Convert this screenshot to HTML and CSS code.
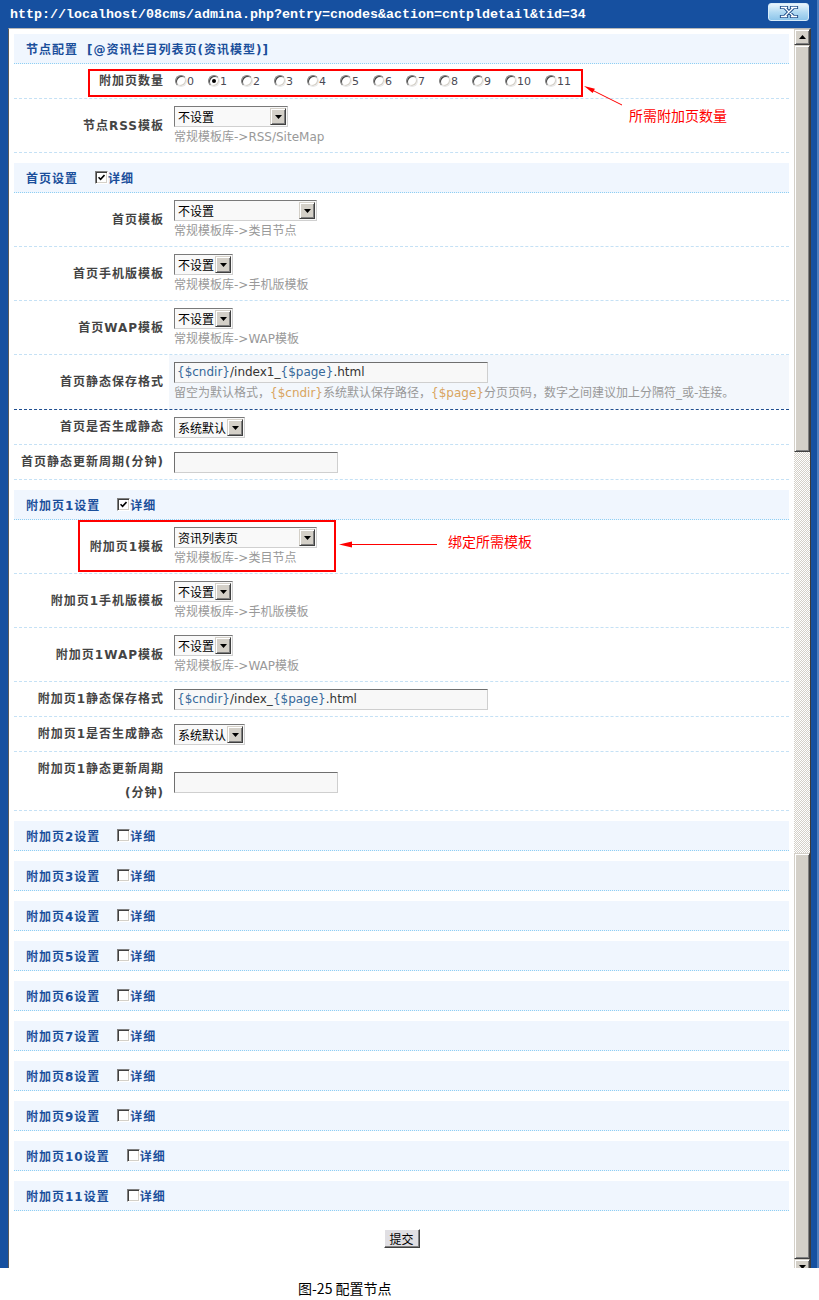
FILE: index.html
```html
<!DOCTYPE html>
<html lang="zh-CN">
<head>
<meta charset="utf-8">
<title>配置节点</title>
<link rel="stylesheet" href="styles.css">
</head>
<body>
<div class="window">
  <div class="titlebar">
    <span class="title">http://localhost/08cms/admina.php?entry=cnodes&amp;action=cntpldetail&amp;tid=34</span>
    <span class="close"><svg width="20" height="12" viewBox="0 0 20 12"><path d="M5.5 1.5 L14.5 10.5 M14.5 1.5 L5.5 10.5 M2.5 1.5h5 M12.5 1.5h5 M2.5 10.5h5 M12.5 10.5h5" stroke="#21508c" stroke-width="3.2" fill="none" stroke-linecap="square"/><path d="M5.5 1.5 L14.5 10.5 M14.5 1.5 L5.5 10.5 M2.5 1.5h5 M12.5 1.5h5 M2.5 10.5h5 M12.5 10.5h5" stroke="#fff" stroke-width="1.3" fill="none" stroke-linecap="square"/></svg></span>
  </div>
  <div class="client">
    <div class="content">
      <form class="form">
        <div class="head">节点配置<span class="sub">[@资讯栏目列表页(资讯模型)]</span></div>
        <div class="row">
          <div class="lab">附加页数量</div>
          <div class="val">
            <div class="radios">
              <label class="rad"><i></i>0</label>
              <label class="rad"><i class="on"></i>1</label>
              <label class="rad"><i></i>2</label>
              <label class="rad"><i></i>3</label>
              <label class="rad"><i></i>4</label>
              <label class="rad"><i></i>5</label>
              <label class="rad"><i></i>6</label>
              <label class="rad"><i></i>7</label>
              <label class="rad"><i></i>8</label>
              <label class="rad"><i></i>9</label>
              <label class="rad"><i></i>10</label>
              <label class="rad"><i></i>11</label>
            </div>
          </div>
        </div>
        <div class="row">
          <div class="lab">节点RSS模板</div>
          <div class="val">
            <div class="sel w114"><span class="txt">不设置</span><span class="btn"><svg width="7" height="4" viewBox="0 0 7 4"><path d="M0 0h7L3.5 4z" fill="#000"/></svg></span></div>
            <div class="hint">常规模板库-&gt;RSS/SiteMap</div>
          </div>
        </div>

        <div class="head gap">首页设置<span class="cb on"><svg width="7" height="7" viewBox="0 0 7 7"><path d="M0.5 3.2 L2.6 5.4 L6.5 1" stroke="#000" stroke-width="1.6" fill="none"/></svg></span>详细</div>
        <div class="row">
          <div class="lab">首页模板</div>
          <div class="val">
            <div class="sel w143"><span class="txt">不设置</span><span class="btn"><svg width="7" height="4" viewBox="0 0 7 4"><path d="M0 0h7L3.5 4z" fill="#000"/></svg></span></div>
            <div class="hint">常规模板库-&gt;类目节点</div>
          </div>
        </div>
        <div class="row">
          <div class="lab">首页手机版模板</div>
          <div class="val">
            <div class="sel w59"><span class="txt">不设置</span><span class="btn"><svg width="7" height="4" viewBox="0 0 7 4"><path d="M0 0h7L3.5 4z" fill="#000"/></svg></span></div>
            <div class="hint">常规模板库-&gt;手机版模板</div>
          </div>
        </div>
        <div class="row">
          <div class="lab">首页WAP模板</div>
          <div class="val">
            <div class="sel w59"><span class="txt">不设置</span><span class="btn"><svg width="7" height="4" viewBox="0 0 7 4"><path d="M0 0h7L3.5 4z" fill="#000"/></svg></span></div>
            <div class="hint">常规模板库-&gt;WAP模板</div>
          </div>
        </div>
        <div class="row hover">
          <div class="lab">首页静态保存格式</div>
          <div class="val">
            <div class="txtin w314"><span class="tok">{$cndir}</span>/index1_<span class="tok">{$page}</span>.html</div>
            <div class="hint">留空为默认格式，<span class="htok">{$cndir}</span>系统默认保存路径，<span class="htok">{$page}</span>分页页码，数字之间建议加上分隔符_或-连接。</div>
          </div>
        </div>
        <div class="row">
          <div class="lab">首页是否生成静态</div>
          <div class="val">
            <div class="sel w71"><span class="txt">系统默认</span><span class="btn"><svg width="7" height="4" viewBox="0 0 7 4"><path d="M0 0h7L3.5 4z" fill="#000"/></svg></span></div>
          </div>
        </div>
        <div class="row">
          <div class="lab">首页静态更新周期(分钟)</div>
          <div class="val">
            <div class="txtin w164"></div>
          </div>
        </div>

        <div class="head gap">附加页1设置<span class="cb on"><svg width="7" height="7" viewBox="0 0 7 7"><path d="M0.5 3.2 L2.6 5.4 L6.5 1" stroke="#000" stroke-width="1.6" fill="none"/></svg></span>详细</div>
        <div class="row">
          <div class="lab">附加页1模板</div>
          <div class="val">
            <div class="sel w143"><span class="txt">资讯列表页</span><span class="btn"><svg width="7" height="4" viewBox="0 0 7 4"><path d="M0 0h7L3.5 4z" fill="#000"/></svg></span></div>
            <div class="hint">常规模板库-&gt;类目节点</div>
          </div>
        </div>
        <div class="row">
          <div class="lab">附加页1手机版模板</div>
          <div class="val">
            <div class="sel w59"><span class="txt">不设置</span><span class="btn"><svg width="7" height="4" viewBox="0 0 7 4"><path d="M0 0h7L3.5 4z" fill="#000"/></svg></span></div>
            <div class="hint">常规模板库-&gt;手机版模板</div>
          </div>
        </div>
        <div class="row">
          <div class="lab">附加页1WAP模板</div>
          <div class="val">
            <div class="sel w59"><span class="txt">不设置</span><span class="btn"><svg width="7" height="4" viewBox="0 0 7 4"><path d="M0 0h7L3.5 4z" fill="#000"/></svg></span></div>
            <div class="hint">常规模板库-&gt;WAP模板</div>
          </div>
        </div>
        <div class="row">
          <div class="lab">附加页1静态保存格式</div>
          <div class="val">
            <div class="txtin w314"><span class="tok">{$cndir}</span>/index_<span class="tok">{$page}</span>.html</div>
          </div>
        </div>
        <div class="row">
          <div class="lab">附加页1是否生成静态</div>
          <div class="val">
            <div class="sel w71"><span class="txt">系统默认</span><span class="btn"><svg width="7" height="4" viewBox="0 0 7 4"><path d="M0 0h7L3.5 4z" fill="#000"/></svg></span></div>
          </div>
        </div>
        <div class="row">
          <div class="lab">附加页1静态更新周期<br>(分钟)</div>
          <div class="val mid">
            <div class="txtin w164"></div>
          </div>
        </div>

        <div class="head gap">附加页2设置<span class="cb"></span>详细</div>
        <div class="head gap">附加页3设置<span class="cb"></span>详细</div>
        <div class="head gap">附加页4设置<span class="cb"></span>详细</div>
        <div class="head gap">附加页5设置<span class="cb"></span>详细</div>
        <div class="head gap">附加页6设置<span class="cb"></span>详细</div>
        <div class="head gap">附加页7设置<span class="cb"></span>详细</div>
        <div class="head gap">附加页8设置<span class="cb"></span>详细</div>
        <div class="head gap">附加页9设置<span class="cb"></span>详细</div>
        <div class="head gap">附加页10设置<span class="cb"></span>详细</div>
        <div class="head gap">附加页11设置<span class="cb"></span>详细</div>

        <div class="submit-bar"><button type="button" class="submit">提交</button></div>
      </form>
    </div>
    <div class="scrollbar">
      <div class="sb-btn raised"><svg width="7" height="4" viewBox="0 0 7 4"><path d="M3.5 0L7 4H0z" fill="#000"/></svg></div>
      <div class="sb-thumb raised"></div>
      <div class="sb-track"></div>
      <div class="sb-thumb2 raised"></div>
      <div class="sb-btn raised"><svg width="7" height="4" viewBox="0 0 7 4"><path d="M0 0h7L3.5 4z" fill="#000"/></svg></div>
    </div>
  </div>
</div>
<p class="caption">图-25 配置节点</p>

<div class="mark m1"></div>
<div class="mark m2"></div>
<div class="note n1">所需附加页数量</div>
<div class="note n2">绑定所需模板</div>
<svg class="arrows" width="819" height="1300" viewBox="0 0 819 1300">
  <line x1="622" y1="105" x2="591" y2="89.5" stroke="#f00" stroke-width="1"/>
  <polygon points="584,86 592.7,93.1 594.9,88.7" fill="#f00"/>
  <line x1="437" y1="544.5" x2="350" y2="544.5" stroke="#f00" stroke-width="1"/>
  <polygon points="339,544.5 352,541.5 352,547.5" fill="#f00"/>
</svg>
</body>
</html>
```
FILE: styles.css
```css
* { box-sizing: border-box; }
html, body { margin: 0; padding: 0; background: #fff; }
body {
  width: 819px;
  height: 1300px;
  position: relative;
  overflow: hidden;
  font: 12px "DejaVu Sans", "Noto Sans CJK SC", sans-serif;
  color: #333;
}

/* window frame */
.window {
  height: 1268px;
  background: #1650a0;
  padding: 0 8px 0 8px;
  display: flex;
  flex-direction: column;
  overflow: hidden;
  box-shadow: inset -2px 0 #4f7fbf;
}
.titlebar {
  height: 28px;
  flex: none;
  display: flex;
  justify-content: space-between;
  align-items: flex-start;
}
.title {
  margin: 7px 0 0 2px;
  font: bold 13.33px/16px "Liberation Mono", "DejaVu Sans Mono", monospace;
  color: #fff;
  white-space: nowrap;
}
.close {
  margin: 3px 2px 0 0;
  width: 41px;
  height: 18px;
  border-radius: 3px;
  border: 1px solid #d9ecf9;
  background: linear-gradient(#eaf5fc, #b4dbf3 50%, #8dc5ea);
  display: flex;
  align-items: center;
  justify-content: center;
}

.client {
  flex: 1;
  min-height: 0;
  display: flex;
  background: #fff;
  border-top: 1px solid #b8b8b8;
  border-left: 1px solid #5a5a5a;
  border-right: 1px solid #3a3a3a;
}
.content {
  flex: 1;
  padding: 5px 5px 0;
  overflow: hidden;
}

/* scrollbar */
.scrollbar {
  width: 16px;
  flex: none;
  display: flex;
  flex-direction: column;
  overflow: hidden;
}
.raised {
  background: #d4d0c8;
  border: 1px solid;
  border-color: #d4d0c8 #404040 #404040 #d4d0c8;
  box-shadow: inset 1px 1px #fff, inset -1px -1px #808080;
}
.sb-btn {
  height: 16px;
  flex: none;
  display: flex;
  align-items: center;
  justify-content: center;
}
.sb-thumb { height: 407px; flex: none; }
.sb-track {
  height: 401px;
  flex: none;
  background: repeating-conic-gradient(#d4d0c8 0 25%, #fff 0 50%) 0 0 / 2px 2px;
}
.sb-thumb2 { height: 406px; flex: none; }

/* form */
.head {
  height: 30px;
  background: #f0f6fe;
  border-bottom: 1px dotted #8ecff3;
  padding-left: 12px;
  display: flex;
  align-items: center;
  font-weight: bold;
  color: #1b4f9b;
  letter-spacing: 1px;
}
.head.gap { margin-top: 10px; }
.head .sub { margin-left: 9px; }

.cb {
  width: 13px;
  height: 13px;
  margin-left: 17px;
  border: 1px solid;
  border-color: #808080 #fff #fff #808080;
  box-shadow: inset 1px 1px #404040, inset -1px -1px #d4d0c8;
  background: #fff;
  display: inline-flex;
  align-items: center;
  justify-content: center;
  flex: none;
}

.row {
  display: grid;
  grid-template-columns: 155px 1fr;
  border-bottom: 1px dashed #c5e1f5;
}
.row.hover { border-bottom-color: #1f4e8f; }
.row.hover .val { background: #f3f7fc; padding-bottom: 6px; }
.lab {
  display: flex;
  align-items: center;
  justify-content: flex-end;
  text-align: right;
  padding: 5px 5px 5px 0;
  line-height: 24px;
  font-weight: bold;
  color: #444;
  letter-spacing: 1px;
}
.val {
  padding: 5px 0 5px 5px;
  display: flex;
  flex-direction: column;
  align-items: flex-start;
}
.val.mid { justify-content: center; }

.radios {
  height: 24px;
  display: flex;
  align-items: center;
}
.rad {
  display: inline-flex;
  align-items: center;
  margin-right: 13px;
  font-size: 11px;
  color: #4a4a55;
}
.rad i {
  width: 12px;
  height: 12px;
  margin: 0 0 0 1px;
  border-radius: 50%;
  border: 1px solid;
  border-color: #808080 #e8e8e8 #e8e8e8 #808080;
  box-shadow: inset 1px 1px #404040, inset -1px -1px #d4d0c8;
  background: #fff;
  display: flex;
  align-items: center;
  justify-content: center;
}
.rad i.on::after {
  content: "";
  width: 4px;
  height: 4px;
  border-radius: 50%;
  background: #000;
}

.sel {
  height: 21px;
  margin-top: 2px;
  display: flex;
  align-items: center;
  border: 1px solid;
  border-color: #7a7a7a #d0d0d0 #d0d0d0 #7a7a7a;
  background: #f9f9f9;
  color: #000;
  padding-left: 3px;
}
.sel .txt { flex: 1; white-space: nowrap; overflow: hidden; }
.sel .btn {
  width: 16px;
  height: 17px;
  margin-right: 1px;
  flex: none;
  background: #d4d0c8;
  border: 1px solid;
  border-color: #d4d0c8 #404040 #404040 #d4d0c8;
  box-shadow: inset 1px 1px #fff, inset -1px -1px #808080;
  display: flex;
  align-items: center;
  justify-content: center;
}
.w59 { width: 59px; }
.w71 { width: 71px; }
.w114 { width: 114px; }
.w143 { width: 143px; }
.w164 { width: 164px; }
.w314 { width: 314px; }

.txtin {
  height: 21px;
  margin-top: 2px;
  border: 1px solid;
  border-color: #6f6f6f #cfcfcf #cfcfcf #6f6f6f;
  background: #f8f8f8;
  padding: 0 2px;
  line-height: 19px;
  color: #333;
  white-space: nowrap;
}
.tok { color: #36689a; }

.hint {
  line-height: 20px;
  color: #999;
  white-space: nowrap;
}
.htok { color: #d9a560; }

.submit-bar {
  display: flex;
  justify-content: center;
  padding-top: 18px;
}
.submit {
  width: 36px;
  height: 19px;
  padding: 0;
  font: 12px "Noto Sans CJK SC", sans-serif;
  line-height: 15px;
  color: #000;
  background: #e0dfe3;
  border: 1px solid;
  border-color: #fff #404040 #404040 #fff;
  box-shadow: inset -1px -1px #808080;
}

.caption {
  margin: 12px 0 0 298px;
  font: 14px/16px "Noto Sans CJK SC", sans-serif;
  color: #000;
}

/* annotations overlay */
.mark {
  position: absolute;
  border: 2px solid #f00;
}
.m1 { left: 88px; top: 69px; width: 495px; height: 28px; }
.m2 { left: 78px; top: 520px; width: 258px; height: 52px; }
.note {
  position: absolute;
  color: #f00;
  font: 14px/16px "Noto Sans CJK SC", sans-serif;
  white-space: nowrap;
}
.n1 { left: 629px; top: 107px; }
.n2 { left: 448px; top: 533px; }
.arrows {
  position: absolute;
  left: 0;
  top: 0;
  pointer-events: none;
}
```
